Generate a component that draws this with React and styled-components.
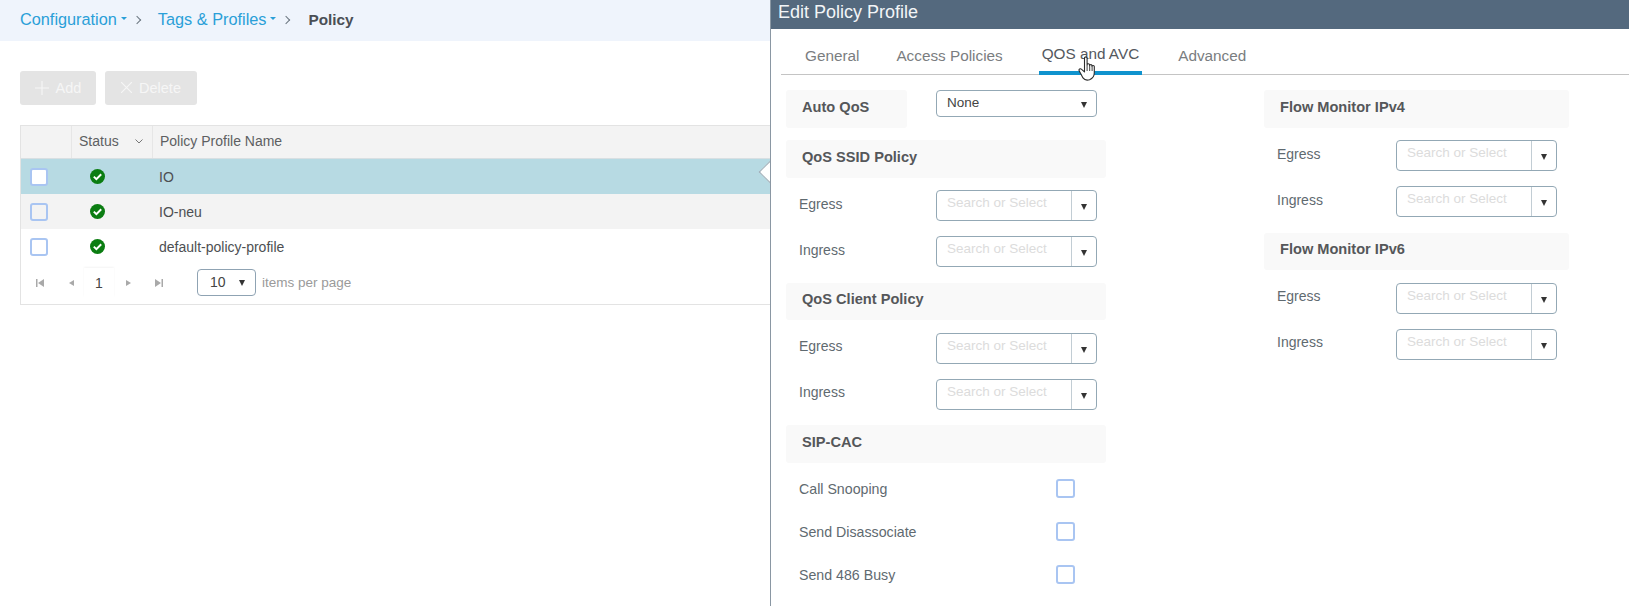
import React from 'react';
import styled, { createGlobalStyle } from 'styled-components';

const GlobalStyle = createGlobalStyle`
  html, body {
    margin: 0;
    padding: 0;
    height: 100%;
    background: #fff;
    overflow: hidden;
  }
  body {
    font-family: "Liberation Sans", Arial, sans-serif;
    color: #58585b;
  }
  * { box-sizing: border-box; }
`;

const Page = styled.div`
  display: flex;
  width: 1629px;
  height: 606px;
  overflow: hidden;
  position: relative;
`;

const Main = styled.div`
  width: 770px;
  flex: none;
`;

const Breadcrumb = styled.div`
  height: 41px;
  background: #eff4fc;
  display: flex;
  align-items: center;
  padding: 0 0 2px 20px;
  font-size: 16.3px;
`;

const Crumb = styled.span`
  color: #2a9fd8;
  display: inline-flex;
  align-items: center;
  &::after {
    content: '';
    margin-left: 4px;
    margin-bottom: 3px;
    border-left: 3px solid transparent;
    border-right: 3px solid transparent;
    border-top: 3px solid #2a9fd8;
  }
`;

const Sep = styled.span`
  display: inline-block;
  width: 6px;
  height: 6px;
  border-top: 1.5px solid #6b7680;
  border-right: 1.5px solid #6b7680;
  transform: rotate(45deg);
  margin: 1px 18px 0 7px;
`;

const Current = styled.span`
  font-weight: 700;
  font-size: 15.3px;
  margin-left: 1px;
  color: #4a4f55;
`;

const Toolbar = styled.div`
  display: flex;
  gap: 9px;
  padding: 30px 0 0 20px;
`;

const GhostButton = styled.div`
  height: 34px;
  width: ${(p) => p.$width}px;
  background: #e4e4e4;
  border-radius: 3px;
  color: #f6f6f6;
  font-size: 14.5px;
  padding-bottom: 1px;
  display: flex;
  align-items: center;
  justify-content: center;
  gap: 7px;
`;

const Table = styled.div`
  margin: 20px 0 0 20px;
  border: 1px solid #e3e3e3;
  border-right: none;
  height: 180px;
`;

const HeadRow = styled.div`
  display: grid;
  grid-template-columns: 50px 81px 1fr;
  height: 33px;
  background: #f3f3f3;
  border-bottom: 1px solid #d8dfe2;
  font-size: 14px;
  color: #5d5f62;
`;

const HeadCell = styled.div`
  display: flex;
  align-items: center;
  justify-content: space-between;
  padding: 0 9px 2px 7px;
  border-left: ${(p) => (p.$first ? 'none' : '1px solid #e6e6e6')};
`;

const Row = styled.div`
  display: grid;
  grid-template-columns: 50px 81px 1fr;
  align-items: center;
  height: 35px;
  background: ${(p) => p.$bg};
  font-size: 14px;
  color: #4d4f52;
`;

const RowBox = styled.div`
  width: 18px;
  height: 18px;
  margin-left: 9px;
  border: 2px solid #a9c5f2;
  border-radius: 3px;
  background: ${(p) => (p.$white ? '#fff' : 'transparent')};
`;

const StatusCell = styled.div`
  display: flex;
  padding-left: 19px;
`;

const NameCell = styled.div`
  padding-left: 7px;
`;

const Pager = styled.div`
  height: 40px;
  display: flex;
  align-items: center;
  padding-bottom: 3px;
  font-size: 13.5px;
`;

const PageIcon = styled.svg`
  width: 8px;
  height: 8px;
  fill: #a9a9a9;
  flex: none;
  margin-left: ${(p) => p.$left}px;
`;

const PageNumber = styled.div`
  width: 30px;
  height: 29px;
  margin-left: 9px;
  display: flex;
  align-items: center;
  justify-content: center;
  font-size: 14px;
  color: #444;
  box-shadow: 0 -1px 2px #f4f4f4;
`;

const PerPage = styled.div`
  margin-left: 34px;
  width: 59px;
  height: 27px;
  border: 1px solid #8fa3b3;
  border-radius: 4px;
  display: flex;
  align-items: center;
  justify-content: space-between;
  padding: 0 10px 2px 12px;
  font-size: 14px;
  color: #444;
`;

const Caret = styled.span`
  flex: none;
  width: 0;
  height: 0;
  margin-top: 3px;
  border-left: 3.5px solid transparent;
  border-right: 3.5px solid transparent;
  border-top: 6px solid #333;
`;

const PerPageLabel = styled.span`
  margin-left: 6px;
  color: #9a9a9a;
  font-size: 13.5px;
`;

const Notch = styled.div`
  position: absolute;
  left: 762px;
  top: 164px;
  width: 16px;
  height: 16px;
  background: #fff;
  border-left: 1px solid #9aaab4;
  border-bottom: 1px solid #9aaab4;
  transform: rotate(45deg);
`;

const Panel = styled.div`
  flex: 1;
  border-left: 1px solid #8a97a3;
  background: #fff;
  position: relative;
`;

const PanelTitle = styled.div`
  height: 29px;
  background: #54697e;
  color: #f2f5f7;
  font-size: 18px;
  padding: 0 0 4px 7px;
  display: flex;
  align-items: center;
`;

const Tabs = styled.div`
  height: 46px;
  margin-left: 10px;
  border-bottom: 1px solid #c4c4c4;
  display: flex;
  padding-left: 21px;
`;

const Tab = styled.div`
  margin-left: ${(p) => p.$gap}px;
  padding: 7px ${(p) => (p.$active ? 3 : 0)}px 0;
  height: 46px;
  margin-bottom: -1px;
  display: flex;
  align-items: center;
  font-size: 15.3px;
  color: ${(p) => (p.$active ? '#54585e' : '#7a7d80')};
  border-bottom: ${(p) => (p.$active ? '4px solid #0f93ce' : 'none')};
`;

const Columns = styled.div`
  display: flex;
  padding: 15px 0 0 15px;
`;

const Column = styled.div`
  width: ${(p) => p.$width}px;
  flex: none;
`;

const Section = styled.div`
  padding-bottom: 0.5px;
`;

const Heading = styled.div`
  height: 37.5px;
  width: ${(p) => p.$width || 320}px;
  margin-bottom: ${(p) => p.$gap ?? 12.5}px;
  background: #f9f9f9;
  border-radius: 3px;
  padding: 0 0 4px 16px;
  display: flex;
  align-items: center;
  font-size: 14.6px;
  font-weight: 700;
  color: #55575a;
`;

const AutoRow = styled.div`
  display: flex;
  gap: 29px;
  height: 50px;
  align-items: flex-start;
`;

const Field = styled.div`
  display: flex;
  align-items: center;
  height: 31.5px;
  margin-bottom: 14.5px;
  width: ${(p) => p.$width || 311}px;
  justify-content: space-between;
  padding-left: 13px;
  font-size: 14px;
  color: #5f6a70;
`;

const FieldLabel = styled.span`
  margin-bottom: 4px;
`;

const Combo = styled.div`
  width: 161px;
  height: ${(p) => p.$height || 31}px;
  border: 1px solid #93a8b5;
  border-radius: 4px;
  display: flex;
  background: #fff;
`;

const ComboText = styled.div`
  flex: 1;
  padding: 4px 0 0 10px;
  font-size: 13.5px;
  color: ${(p) => (p.$value ? '#444' : '#dcdcdc')};
`;

const ComboArrow = styled.div`
  width: 25px;
  flex: none;
  display: flex;
  align-items: center;
  justify-content: center;
  border-left: ${(p) => (p.$plain ? 'none' : '1px solid #c2cdd4')};
`;

const CheckRow = styled.div`
  display: flex;
  align-items: center;
  justify-content: space-between;
  height: 43px;
  width: 289px;
  padding-left: 13px;
  font-size: 14.2px;
  color: #5f6a70;
`;

const Checkbox = styled.div`
  width: 19px;
  height: 19px;
  margin-bottom: 2px;
  border: 2px solid #a9c5f2;
  border-radius: 3px;
`;

const Cursor = styled.svg`
  position: absolute;
  left: 307px;
  top: 56px;
  width: 20px;
  height: 26px;
`;

const StatusOk = () => (
  <svg width="15" height="15" viewBox="0 0 15 15">
    <circle cx="7.5" cy="7.5" r="7.5" fill="#0b7d12" />
    <path d="M3.8 7.6l2.6 2.5 4.8-4.8" fill="none" stroke="#fff" strokeWidth="2" />
  </svg>
);

const SelectField = ({ label, width }) => (
  <Field $width={width}>
    <FieldLabel>{label}</FieldLabel>
    <Combo>
      <ComboText>Search or Select</ComboText>
      <ComboArrow>
        <Caret />
      </ComboArrow>
    </Combo>
  </Field>
);

const Group = ({ title, width, fieldWidth }) => (
  <Section>
    <Heading $width={width}>{title}</Heading>
    <SelectField label="Egress" width={fieldWidth} />
    <SelectField label="Ingress" width={fieldWidth} />
  </Section>
);

const rows = [
  { name: 'IO', bg: '#b7dae3', white: true },
  { name: 'IO-neu', bg: '#f3f3f3' },
  { name: 'default-policy-profile', bg: '#fff' },
];

const App = () => {
  return (
    <Page>
      <GlobalStyle />
      <Main>
        <Breadcrumb>
          <Crumb>Configuration</Crumb>
          <Sep />
          <Crumb>Tags &amp; Profiles</Crumb>
          <Sep />
          <Current>Policy</Current>
        </Breadcrumb>
        <Toolbar>
          <GhostButton $width={76}>
            <svg width="14" height="14" viewBox="0 0 14 14">
              <path d="M7 0v14M0 7h14" stroke="#f6f6f6" strokeWidth="1.2" />
            </svg>
            Add
          </GhostButton>
          <GhostButton $width={92}>
            <svg width="11" height="11" viewBox="0 0 11 11">
              <path d="M0 0l11 11M11 0L0 11" stroke="#f6f6f6" strokeWidth="1.1" />
            </svg>
            Delete
          </GhostButton>
        </Toolbar>
        <Table>
          <HeadRow>
            <HeadCell $first />
            <HeadCell>
              Status
              <svg width="8" height="5" viewBox="0 0 8 5">
                <path d="M.5.5L4 4 7.500.5" fill="none" stroke="#777" />
              </svg>
            </HeadCell>
            <HeadCell>Policy Profile Name</HeadCell>
          </HeadRow>
          {rows.map((row) => (
            <Row key={row.name} $bg={row.bg}>
              <RowBox $white={row.white} />
              <StatusCell>
                <StatusOk />
              </StatusCell>
              <NameCell>{row.name}</NameCell>
            </Row>
          ))}
          <Pager>
            <PageIcon $left={15} viewBox="0 0 8 8">
              <path d="M0 0h1.500v8H0zM8 0v8L2 4z" />
            </PageIcon>
            <PageIcon $left={23} viewBox="0 0 8 8">
              <path d="M7 1v6L2 4z" />
            </PageIcon>
            <PageNumber>1</PageNumber>
            <PageIcon $left={11} viewBox="0 0 8 8">
              <path d="M1 1v6l5-3z" />
            </PageIcon>
            <PageIcon $left={22} viewBox="0 0 8 8">
              <path d="M0 0v8l6-4zM6.500 0H8v8H6.500z" />
            </PageIcon>
            <PerPage>
              10
              <Caret />
            </PerPage>
            <PerPageLabel>items per page</PerPageLabel>
          </Pager>
        </Table>
      </Main>
      <Notch />
      <Panel>
        <PanelTitle>Edit Policy Profile</PanelTitle>
        <Tabs>
          <Tab $gap={3}>General</Tab>
          <Tab $gap={37}>Access Policies</Tab>
          <Tab $active $gap={36}>QOS and AVC</Tab>
          <Tab $gap={36}>Advanced</Tab>
        </Tabs>
        <Columns>
          <Column $width={478}>
            <AutoRow>
              <Heading $width={121}>Auto QoS</Heading>
              <Combo $height={27}>
                <ComboText $value>None</ComboText>
                <ComboArrow $plain>
                  <Caret />
                </ComboArrow>
              </Combo>
            </AutoRow>
            <Group title="QoS SSID Policy" />
            <Group title="QoS Client Policy" />
            <Heading $gap={5}>SIP-CAC</Heading>
            <CheckRow>
              Call Snooping
              <Checkbox />
            </CheckRow>
            <CheckRow>
              Send Disassociate
              <Checkbox />
            </CheckRow>
            <CheckRow>
              Send 486 Busy
              <Checkbox />
            </CheckRow>
          </Column>
          <Column $width={310}>
            <Group title="Flow Monitor IPv4" width={305} fieldWidth={293} />
            <Group title="Flow Monitor IPv6" width={305} fieldWidth={293} />
          </Column>
        </Columns>
        <Cursor viewBox="0 0 20 26">
          <path
            d="M6.500 2.200c0-1.600 2.600-1.600 2.600 0v6.600c0-1.400 2.500-1.400 2.500 0v.8c0-1.300 2.400-1.300 2.400.1v.7c0-1.200 2.300-1.200 2.300.2v6.200c0 3.200-1.600 5.700-4.700 6.900-2.800.9-5.200.2-6.600-1.800L1.300 15c-1-1.600 1-3 2.300-1.700l2.900 2.600z"
            fill="#fff"
            stroke="#2b2b2b"
            strokeWidth="1.100"
            strokeLinejoin="round"
          />
          <path d="M9.100 9v6M11.700 9.800V15M14.100 10.800V15" stroke="#2b2b2b" strokeWidth=".9" fill="none" />
        </Cursor>
      </Panel>
    </Page>
  );
};

export default App;
